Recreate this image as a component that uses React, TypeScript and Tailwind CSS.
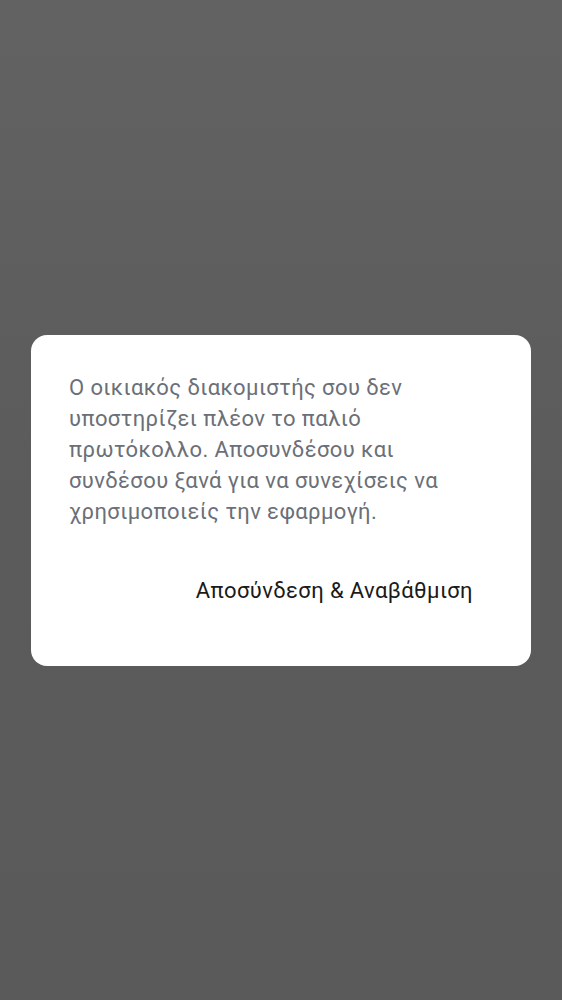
export default function App() {
  return (
    <div
      className="min-h-[1000px] w-full flex items-center justify-center px-[31px] bg-gradient-to-b from-[#626262] via-[#5b5b5b] to-[#5a5a5a]"
      style={{ fontFamily: 'Roboto, "Noto Sans", sans-serif' }}
    >
      <div className="w-[500px] rounded-[16px] bg-white pt-[37px] pb-[51px] pl-[38px] pr-[60px]">
        <p className="text-[22px] leading-[31px] tracking-[0.4px] text-[#6b6f78]">
          Ο οικιακός διακομιστής σου δεν υποστηρίζει πλέον το παλιό πρωτόκολλο. Αποσυνδέσου και
          συνδέσου ξανά για να συνεχίσεις να χρησιμοποιείς την εφαρμογή.
        </p>
        <div className="mt-[40px] -mr-[14px] flex justify-end">
          <button className="h-[48px] px-[12px] text-[22px] tracking-[0.4px] text-[#1a1a1a] rounded-full">
            Αποσύνδεση &amp; Αναβάθμιση
          </button>
        </div>
      </div>
    </div>
  )
}
